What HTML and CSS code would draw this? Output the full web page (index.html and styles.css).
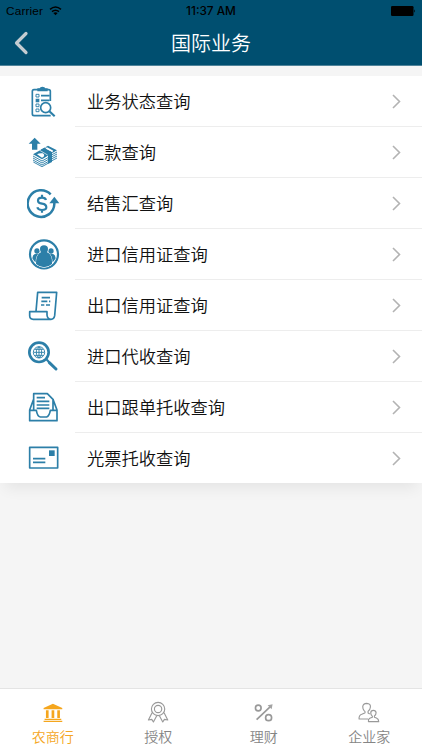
FILE: index.html
```html
<!DOCTYPE html>
<html lang="zh-CN">
<head>
<meta charset="utf-8">
<meta name="viewport" content="width=device-width, initial-scale=1">
<title>国际业务</title>
<link rel="stylesheet" href="styles.css">
</head>
<body>
<div class="app">
  <header class="header">
    <div class="status">
      <div class="carrier"><span>Carrier</span>
        <svg class="wifi" viewBox="0 0 39 30"><path d="M3 10Q19.500-4 36 10M9 17Q19.500 8 30 17" fill="none" stroke="#000" stroke-width="4.500"/><path d="M13 21Q19.500 16 26 21L19.500 28Z"/></svg>
      </div>
      <div class="clock">11:37 AM</div>
      <div class="power"><svg class="battery" viewBox="0 0 25 10"><rect width="22.500" height="10" rx="1.300"/><path d="M23.200 3.200Q25 5 23.200 6.800Z"/></svg></div>
    </div>
    <div class="nav">
      <svg class="back" viewBox="0 0 16 24"><path d="M13 2.500L3.500 12L13 21.500"/></svg>
      <h1>国际业务</h1>
    </div>
  </header>
  <main class="list">
    <div class="row">
      <svg class="icon" viewBox="21 24 102 102"><path d="M91 72V43Q91 38 86 38H42Q37 38 37 43V111Q37 116 42 116H92M63 56H88M63 70H88"/><path class="fill" d="M52 43V34H59Q60 29 67 29Q75 29 76 34H83V43ZM47 65H58V76H47Z"/><path class="thin" d="M48 52H57V60H48ZM48 81H57V89H48ZM48 96H57V104H48Z"/><circle class="paper" cx="77" cy="92" r="15"/><path class="bold" d="M88 103L104 118"/></svg>
      <div class="cell"><span>业务状态查询</span><svg class="arrow" viewBox="0 0 9 15"><path d="M1 1L7.500 7.500L1 14"/></svg></div>
    </div>
    <div class="row">
      <svg class="icon" viewBox="21 177 102 102"><path class="fill" d="M44 182L62 200H52V218H36V200H26ZM39 232L84 206L111 220L66 247Z"/><path class="white" d="M51 232Q59 227 68 229Q76 234 70 240L66 242ZM81 211L100 221L96 225Q88 219 79 221Q73 217 81 211Z"/><path class="thin" d="M39 237L66 252L84 242M39 243L66 258L84 248M39 249L66 264L84 254M40 255L66 269L84 259M96 233L111 225M96 239L111 231M96 245L111 237M96 251L111 243"/><path class="fill" d="M62 218L73 212L96 226V255L84 261V233Z"/><path class="hairline" d="M59 220L83 234M75 211L99 225"/></svg>
      <div class="cell"><span>汇款查询</span><svg class="arrow" viewBox="0 0 9 15"><path d="M1 1L7.500 7.500L1 14"/></svg></div>
    </div>
    <div class="row">
      <svg class="icon" viewBox="21 24 102 102"><path class="heavy" d="M92 46A40 40 0 1 0 103 75V67"/><path class="fill" d="M103 53L118 73H88Z"/><path class="bold" d="M78 63Q76 56 66 56Q54 56 54 65Q54 72 66 74Q79 76 79 85Q79 93 66 93Q54 93 52 85M66 47V57M66 92V101"/></svg>
      <div class="cell"><span>结售汇查询</span><svg class="arrow" viewBox="0 0 9 15"><path d="M1 1L7.500 7.500L1 14"/></svg></div>
    </div>
    <div class="row">
      <svg class="icon" viewBox="21 177 102 102"><circle class="bold" cx="72" cy="226" r="42"/><circle class="fill" cx="51" cy="216" r="8"/><circle class="fill" cx="93" cy="216" r="8"/><path class="fill" d="M37 238Q38 224 50 224Q56 224 59 227Q49 235 49 251Q41 247 37 238ZM107 238Q106 224 94 224Q88 224 85 227Q95 235 95 251Q103 247 107 238Z"/><path class="fill halo" d="M63 220Q60 215 60 210Q60 199 72 199Q84 199 84 210Q84 215 81 220Q97 225 96 255Q84 265 72 265Q60 265 48 255Q48 225 63 220Z"/></svg>
      <div class="cell"><span>进口信用证查询</span><svg class="arrow" viewBox="0 0 9 15"><path d="M1 1L7.500 7.500L1 14"/></svg></div>
    </div>
    <div class="row">
      <svg class="icon" viewBox="21 24 102 102"><path d="M48 91L53 34H110L104 104Q102 115 93 115H40Q29 114 29 104V92H81V102Q82 114 93 115M65 50H90M64 61H82M87 61H91M63 72H73M78 72H90"/></svg>
      <div class="cell"><span>出口信用证查询</span><svg class="arrow" viewBox="0 0 9 15"><path d="M1 1L7.500 7.500L1 14"/></svg></div>
    </div>
    <div class="row">
      <svg class="icon" viewBox="21 177 102 102"><circle class="ring" cx="57" cy="214" r="29"/><circle class="thin" cx="57" cy="214" r="17"/><path class="thin" d="M41 214H73M57 198V230M44 205H70M44 223H70"/><ellipse class="thin" cx="57" cy="214" rx="8" ry="16"/><path class="bold" d="M79 235L87 243"/><path class="handle" d="M88 245L108 264"/></svg>
      <div class="cell"><span>进口代收查询</span><svg class="arrow" viewBox="0 0 9 15"><path d="M1 1L7.500 7.500L1 14"/></svg></div>
    </div>
    <div class="row">
      <svg class="icon" viewBox="21 24 102 102"><path d="M41 80V32H82L99 49V80M41 48L29 81V113H111V81L99 49M29 82H49Q52 100 61 102H80Q88 99 91 82H111M50 44H75M50 55H88M50 66H88M50 76H88"/></svg>
      <div class="cell"><span>出口跟单托收查询</span><svg class="arrow" viewBox="0 0 9 15"><path d="M1 1L7.500 7.500L1 14"/></svg></div>
    </div>
    <div class="row">
      <svg class="icon" viewBox="21 177 102 102"><path d="M29 196H113V258H29ZM39 230H76M39 241H76"/><path class="fill" d="M87 205H104V222H87Z"/></svg>
      <div class="cell"><span>光票托收查询</span><svg class="arrow" viewBox="0 0 9 15"><path d="M1 1L7.500 7.500L1 14"/></svg></div>
    </div>
  </main>
  <nav class="tabs">
    <div class="tab active"><svg viewBox="122.200 63 72 72"><path class="solid" d="M130 84L158 71L186 84V88H130ZM137 91H145V114H137ZM154 91H162V114H154ZM171 91H179V114H171ZM133 116H183V120H133ZM130 122H186V126H130Z"/></svg><span>农商行</span></div>
    <div class="tab"><svg viewBox="438.750 63 72 72"><circle cx="475" cy="87" r="20"/><circle cx="475" cy="87" r="11"/><path d="M457 98L446 120L456 118L461 126L471 107M493 98L504 120L494 118L489 126L479 107"/></svg><span>授权</span></div>
    <div class="tab"><svg viewBox="122.200 63 72 72"><g class="percent"><circle cx="141" cy="84" r="8.500"/><circle cx="172" cy="113" r="9"/><path d="M136 119L178 79"/></g><path class="solid" d="M169 76L184 73L181 88Z"/></svg><span>理财</span></div>
    <div class="tab"><svg viewBox="438.750 63 72 72"><path d="M472 117H445Q444 106 453 103L462 99Q465 96 460 92Q456 87 456 80Q457 70 468 70Q480 71 479 81Q478 91 472 94V99L477 102M473 125H504Q504 117 497 114L491 112V108Q496 104 496 98Q495 91 488 91Q480 91 480 99Q480 105 485 109V112L477 115Q472 118 473 125Z"/></svg><span>企业家</span></div>
  </nav>
</div>
</body>
</html>
```
FILE: styles.css
```css
* { box-sizing: border-box; }
body {
  margin: 0;
  font-family: "Noto Sans CJK SC", sans-serif;
  font-weight: 350;
  color: #111;
}
.app {
  display: flex;
  flex-direction: column;
  height: 750px;
  background: #f5f5f5;
}
.header {
  height: 66px;
  background: #004f70;
  border-bottom: 1px solid #50849a;
}
.status {
  display: grid;
  grid-template-columns: 1fr auto 1fr;
  height: 22px;
  padding: 0 6px;
  align-items: center;
  font: 400 11.8px/22px "Liberation Sans", sans-serif;
  color: #000;
}
.carrier { display: flex; align-items: center; gap: 6px; }
.carrier span { letter-spacing: .15px; }
.wifi { width: 13px; height: 10px; }
.clock { font-family: Inter, sans-serif; font-weight: 500; font-size: 11.8px; }
.power { display: flex; justify-content: flex-end; }
.battery { width: 25px; height: 10px; }
.nav {
  display: grid;
  grid-template-columns: 40px 1fr 40px;
  align-items: center;
  height: 42px;
}
.back { width: 16px; height: 24px; margin-left: 13px; }
.back path { fill: none; stroke: #c4ccd1; stroke-width: 3.2; stroke-linecap: round; stroke-linejoin: round; }
h1 { margin: 0; font-size: 20px; line-height: 42px; font-weight: 350; color: #fff; text-align: center; }
.list {
  margin-top: 10px;
  background: #fff;
  box-shadow: 0 10px 14px -5px rgba(0, 0, 0, .07);
}
.row { display: flex; align-items: center; height: 51px; }
.icon {
  flex: none;
  width: 34px;
  height: 34px;
  margin: 0 14px 0 27px;
  fill: none;
  stroke: #2c7fa8;
  stroke-width: 5;
  stroke-linejoin: round;
}
.icon .fill { fill: #2c7fa8; stroke: none; }
.icon .thin { stroke-width: 2.8; }
.icon .bold { stroke-width: 6.5; }
.icon .heavy { stroke-width: 7.5; }
.icon .ring { stroke-width: 8; }
.icon .handle { stroke-width: 9; stroke-linecap: round; }
.icon .white { fill: #fff; stroke: none; }
.icon .paper { fill: #fff; }
.icon .hairline { stroke: #fff; stroke-width: 2; }
.icon .halo { stroke: #fff; stroke-width: 3; paint-order: stroke; }
.cell {
  display: flex;
  flex: 1;
  align-items: center;
  justify-content: space-between;
  height: 51px;
  padding: 0 21px 0 12px;
  border-bottom: 1px solid #ededed;
  font-size: 17.25px;
}
.cell span { margin-bottom: 2px; }
.row:last-child { height: 50px; }
.row:last-child .cell { border-bottom: 0; }
.arrow { width: 9px; height: 15px; fill: none; stroke: #b3b3b3; stroke-width: 1.6; }
.tabs {
  display: grid;
  grid-template-columns: repeat(4, 1fr);
  height: 62px;
  margin-top: auto;
  border-top: 1px solid #e4e4e4;
  background: #fff;
}
.tab {
  display: flex;
  flex-direction: column;
  align-items: center;
  padding-top: 12px;
  color: #858585;
  font-size: 14px;
  line-height: 22px;
}
.tab svg { width: 24px; height: 24px; fill: none; stroke: #999; stroke-width: 3.4; stroke-linejoin: round; }
.tab .solid { fill: #a3a3a3; stroke: none; }
.tab .percent { stroke-width: 5; }
.tab.active { color: #f5a623; }
.active .solid { fill: #f5a61d; }
```
